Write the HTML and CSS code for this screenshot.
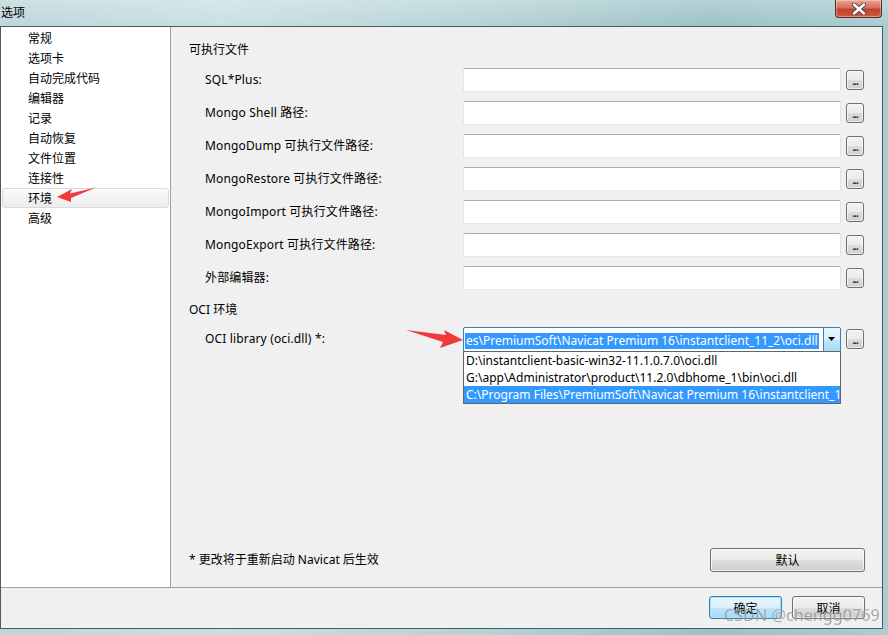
FILE: index.html
```html
<!DOCTYPE html>
<html lang="zh">
<head>
<meta charset="utf-8">
<title>选项</title>
<link rel="stylesheet" href="styles.css">
</head>
<body>
<div class="window">
  <div class="titlebar">
    <span class="title">选项</span>
    <div class="close">
      <svg width="20" height="12" viewBox="0 0 20 12">
        <path d="M5 1.5 L15 10.5 M15 1.5 L5 10.5" stroke="#3a4656" stroke-width="4.2" stroke-linecap="round"/>
        <path d="M5 1.5 L15 10.5 M15 1.5 L5 10.5" stroke="#ffffff" stroke-width="2.4" stroke-linecap="round"/>
      </svg>
    </div>
  </div>
  <div class="client">
    <div class="main">
      <ul class="sidebar">
        <li>常规</li>
        <li>选项卡</li>
        <li>自动完成代码</li>
        <li>编辑器</li>
        <li>记录</li>
        <li>自动恢复</li>
        <li>文件位置</li>
        <li>连接性</li>
        <li class="selected">环境</li>
        <li>高级</li>
      </ul>
      <div class="panel">
        <div class="heading">可执行文件</div>
        <div class="rows">
          <label>SQL*Plus:</label><div class="input"></div><div class="dots">...</div>
          <label>Mongo Shell 路径:</label><div class="input"></div><div class="dots">...</div>
          <label>MongoDump 可执行文件路径:</label><div class="input"></div><div class="dots">...</div>
          <label>MongoRestore 可执行文件路径:</label><div class="input"></div><div class="dots">...</div>
          <label>MongoImport 可执行文件路径:</label><div class="input"></div><div class="dots">...</div>
          <label>MongoExport 可执行文件路径:</label><div class="input"></div><div class="dots">...</div>
          <label>外部编辑器:</label><div class="input"></div><div class="dots">...</div>
        </div>
        <div class="heading heading-oci">OCI 环境</div>
        <div class="rows">
          <label>OCI library (oci.dll) *:</label>
          <div class="combo">
            <div class="combo-text"><span class="sel">es\PremiumSoft\Navicat Premium 16\instantclient_11_2\oci.dll</span></div>
            <div class="combo-btn"><svg width="8" height="5" viewBox="0 0 8 5"><path d="M0 0 H7 L3.5 4 Z" fill="#000"/></svg></div>
            <ul class="droplist">
              <li>D:\instantclient-basic-win32-11.1.0.7.0\oci.dll</li>
              <li>G:\app\Administrator\product\11.2.0\dbhome_1\bin\oci.dll</li>
              <li class="hl">C:\Program Files\PremiumSoft\Navicat Premium 16\instantclient_11_2\oci.dll</li>
            </ul>
          </div>
          <div class="dots">...</div>
        </div>
        <div class="note-row">
          <span class="note">* 更改将于重新启动 Navicat 后生效</span>
          <button class="btn btn-default">默认</button>
        </div>
      </div>
    </div>
    <div class="footer">
      <button class="btn btn-ok">确定</button>
      <button class="btn btn-cancel">取消</button>
    </div>
  </div>
  <svg class="arrow arrow-side" width="44" height="16" viewBox="0 0 44 16">
    <path d="M1 10 L16 2 L14 6.5 L40 0.5 L15 11 L15 15 Z" fill="#f03a3a"/>
  </svg>
  <svg class="arrow arrow-oci" width="58" height="20" viewBox="0 0 58 20">
    <path d="M0 1 L40 6 L38 1 L57 11 L34 19 L37 13 Z" fill="#f03a3a"/>
  </svg>
  <div class="watermark">CSDN @chengg0769</div>
</div>
</body>
</html>
```

FILE: styles.css
```css
* { box-sizing: border-box; }
html, body { margin: 0; padding: 0; }
body {
  width: 888px;
  height: 635px;
  overflow: hidden;
  font-family: "Noto Sans", "Noto Sans CJK SC", sans-serif;
  font-size: 12px;
  color: #000;
}
.window {
  position: relative;
  width: 888px;
  height: 635px;
  display: grid;
  grid-template-rows: 26px 603px 6px;
  background: linear-gradient(90deg, #bcd6da 0%, #c9e0e2 25%, #b5d2d5 55%, #9cc2c6 80%, #a9cdd1 100%);
}
.titlebar {
  display: flex;
  align-items: flex-start;
  justify-content: space-between;
  padding-right: 6px;
  background: linear-gradient(180deg, rgba(255,255,255,0.25), rgba(255,255,255,0));
}
.title {
  font-family: "Noto Sans CJK SC", sans-serif;
  font-size: 12px;
  line-height: 24px;
  padding-left: 1px;
  color: #000;
}
.close {
  width: 47px;
  height: 18px;
  border: 1px solid #5a2a22;
  border-top: none;
  border-radius: 0 0 4px 4px;
  background: linear-gradient(180deg, #e9a493 0%, #d8705c 45%, #c0412c 55%, #cf5a3e 100%);
  display: flex;
  align-items: center;
  justify-content: center;
  box-shadow: inset 0 0 0 1px rgba(255,255,255,0.35);
}
.client {
  width: 883px;
  border: 1px solid #4b5c60;
  background: #f0f0f0;
  display: flex;
  flex-direction: column;
}
.main {
  height: 561px;
  display: flex;
  border-bottom: 1px solid #a0a0a0;
}
.sidebar {
  list-style: none;
  margin: 0;
  padding: 1px 0 0 1px;
  width: 170px;
  flex-shrink: 0;
  background: #fff;
  border-right: 1px solid #a0a0a0;
}
.sidebar li {
  height: 20px;
  line-height: 20px;
  padding-left: 26px;
  font-family: "Noto Sans CJK SC", sans-serif;
  font-size: 12px;
  color: #000;
}
.sidebar li.selected {
  border: 1px solid #d9d9d9;
  border-radius: 3px;
  background: linear-gradient(180deg, #fafafa 0%, #ececec 100%);
  line-height: 18px;
  padding-left: 25px;
  margin-right: 1px;
}
.panel {
  flex: 1;
  min-width: 0;
  display: flex;
  flex-direction: column;
  padding: 15px 17px 15px 18px;
}
.heading {
  line-height: 16px;
  height: 16px;
  margin-bottom: 10px;
}
.heading-oci {
  margin-top: 12px;
  margin-bottom: 9px;
}
.rows {
  display: grid;
  grid-template-columns: 253px 378px 18px;
  grid-auto-rows: 24px;
  column-gap: 5px;
  row-gap: 9px;
  padding-left: 16px;
}
.rows label {
  align-self: center;
  line-height: 16px;
  white-space: nowrap;
  letter-spacing: 0.15px;
}
.input {
  background: #fff;
  border: 1px solid #e2e3ea;
  border-top-color: #abadb3;
  border-bottom-color: #e3e9ef;
  border-radius: 2px;
}
.dots {
  align-self: center;
  height: 20px;
  border: 1px solid #707070;
  border-radius: 3px;
  background: linear-gradient(180deg, #f2f2f2 0%, #ebebeb 50%, #dddddd 51%, #cfcfcf 100%);
  box-shadow: inset 0 0 0 1px rgba(255,255,255,0.6);
  font-size: 10px;
  font-weight: bold;
  color: #1a2a5a;
  text-align: center;
  line-height: 20px;
  letter-spacing: -1px;
}
.combo {
  position: relative;
  height: 25px;
  background: #fff;
  border: 1px solid #3c7fb1;
  border-radius: 2px;
  display: flex;
}
.combo-text {
  flex: 1;
  overflow: hidden;
  white-space: nowrap;
  padding: 4px 0 0 1px;
}
.sel {
  display: inline-block;
  background: #3399ff;
  color: #fff;
  line-height: 16px;
  padding: 0 1px;
}
.combo-btn {
  width: 17px;
  margin: 0;
  border-left: 1px solid #3c7fb1;
  background: linear-gradient(180deg, #eaf6fd 0%, #d9f0fc 50%, #bee6fd 51%, #a7d9f5 100%);
  display: flex;
  align-items: center;
  justify-content: center;
}
.droplist {
  position: absolute;
  top: 100%;
  left: -1px;
  width: 378px;
  margin: 0;
  padding: 0;
  list-style: none;
  background: #fff;
  border: 1px solid #646464;
  z-index: 2;
}
.droplist li {
  height: 17px;
  line-height: 17px;
  padding-left: 2px;
  white-space: nowrap;
  overflow: hidden;
}
.droplist li.hl {
  background: #3399ff;
  color: #fff;
}
.note-row {
  margin-top: auto;
  display: flex;
  align-items: center;
  justify-content: space-between;
}
.note { line-height: 16px; }
.btn {
  font-family: "Noto Sans CJK SC", sans-serif;
  font-size: 12px;
  color: #000;
  border: 1px solid #707070;
  border-radius: 3px;
  background: linear-gradient(180deg, #f2f2f2 0%, #ebebeb 50%, #dddddd 51%, #cfcfcf 100%);
  box-shadow: inset 0 0 0 1px rgba(255,255,255,0.7);
  padding: 0;
  line-height: 20px;
}
.btn-default {
  width: 155px;
  height: 24px;
}
.footer {
  height: 40px;
  display: flex;
  justify-content: flex-end;
  align-items: flex-start;
  gap: 10px;
  padding: 8px 17px 0 0;
}
.btn-ok, .btn-cancel {
  width: 73px;
  height: 23px;
}
.btn-ok {
  border-color: #3c7fb1;
  background: linear-gradient(180deg, #eaf6fd 0%, #d9f0fc 50%, #bee6fd 51%, #a7d9f5 100%);
  box-shadow: inset 0 0 0 1px #9fe4fb;
}
.arrow { position: absolute; }
.arrow-side { left: 56px; top: 187px; }
.arrow-oci { left: 406px; top: 329px; }
.watermark {
  position: absolute;
  left: 724px;
  top: 604px;
  font-family: "Noto Sans", sans-serif;
  font-size: 16px;
  line-height: 22px;
  color: rgba(105,105,105,0.7);
  -webkit-text-stroke: 0.3px rgba(255,255,255,0.7);
  white-space: nowrap;
  letter-spacing: 0.1px;
}
```
